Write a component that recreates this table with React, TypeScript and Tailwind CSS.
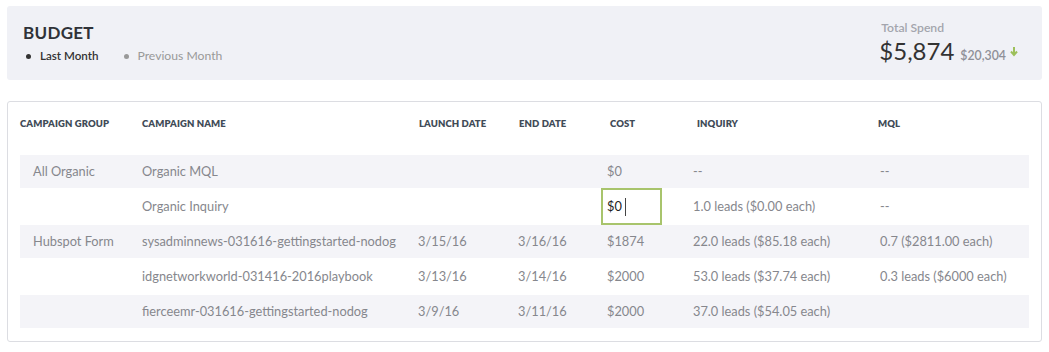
import React from "react";

const font = { fontFamily: "Lato, 'Open Sans', sans-serif" };

type Row = {
  group: string;
  name: string;
  launch: string;
  end: string;
  cost: string;
  inquiry: string;
  mql: string;
  striped: boolean;
  editing?: boolean;
};

const rows: Row[] = [
  { group: "All Organic", name: "Organic MQL", launch: "", end: "", cost: "$0", inquiry: "--", mql: "--", striped: true },
  { group: "", name: "Organic Inquiry", launch: "", end: "", cost: "$0", inquiry: "1.0 leads ($0.00 each)", mql: "--", striped: false, editing: true },
  { group: "Hubspot Form", name: "sysadminnews-031616-gettingstarted-nodog", launch: "3/15/16", end: "3/16/16", cost: "$1874", inquiry: "22.0 leads ($85.18 each)", mql: "0.7 ($2811.00 each)", striped: true },
  { group: "", name: "idgnetworkworld-031416-2016playbook", launch: "3/13/16", end: "3/14/16", cost: "$2000", inquiry: "53.0 leads ($37.74 each)", mql: "0.3 leads ($6000 each)", striped: false },
  { group: "", name: "fierceemr-031616-gettingstarted-nodog", launch: "3/9/16", end: "3/11/16", cost: "$2000", inquiry: "37.0 leads ($54.05 each)", mql: "", striped: true },
];

const cols = "grid grid-cols-[122px_276px_100px_83px_89px_186px_1fr]";

export default function App() {
  return (
    <div className="bg-white w-[1049px] h-[352px] pt-[6px] px-[7px]" style={font}>
      <div className="bg-[#f0f1f6] rounded-[3px] h-[74px] flex justify-between pl-[16px] pr-[24px]">
        <div className="pt-[17px]">
          <div className="text-[17px] font-bold text-[#2f3238] tracking-[0.3px] leading-[20px]">BUDGET</div>
          <div className="flex items-center mt-[6px] text-[11.6px] leading-[14px]">
            <span className="w-[5px] h-[5px] rounded-full bg-[#333] ml-[3px] mr-[9px]" />
            <span className="text-[#333] font-semibold">Last Month</span>
            <span className="w-[5px] h-[5px] rounded-full bg-[#999] ml-[26px] mr-[8px]" />
            <span className="text-[#999] text-[12.2px]">Previous Month</span>
          </div>
        </div>
        <div className="pt-[15px]">
          <div className="text-[12.2px] text-[#a3a5ad] font-semibold leading-[14px] pl-[2px]">Total Spend</div>
          <div className="flex items-baseline mt-[1px]">
            <span className="text-[24px] text-[#333] leading-[30px]">$5,874</span>
            <span className="text-[12.3px] text-[#8f9098] font-semibold ml-[6px]">$20,304</span>
            <svg width="8" height="10" viewBox="0 0 8 10" className="ml-[4px] self-center mt-[2px]">
              <path d="M4 0v7M1 4.5L4 8l3-3.5" stroke="#9dc05a" strokeWidth="2" fill="none" />
            </svg>
          </div>
        </div>
      </div>

      <div className="mt-[21px] border border-[#dcdde2] rounded-[3px] h-[241px] px-[12px]">
        <div className={`${cols} h-[44px] items-center text-[9.5px] font-extrabold text-[#414b57] tracking-[0.1px]`}>
          <div>CAMPAIGN GROUP</div>
          <div>CAMPAIGN NAME</div>
          <div className="pl-[1px]">LAUNCH DATE</div>
          <div className="pl-[1px]">END DATE</div>
          <div className="pl-[9px]">COST</div>
          <div className="pl-[7px]">INQUIRY</div>
          <div className="pl-[2px]">MQL</div>
        </div>
        <div className="mt-[9px]">
          {rows.map((r, i) => (
            <div
              key={i}
              className={`${cols} items-center text-[12.8px] text-[#86878d] ${r.striped ? "bg-[#f4f4f8] h-[33px]" : "bg-white h-[37px]"}`}
            >
              <div className="pl-[13px]">{r.group}</div>
              <div>{r.name}</div>
              <div>{r.launch}</div>
              <div>{r.end}</div>
              <div>
                {r.editing ? (
                  <div className="w-[61px] h-[37px] border-2 border-[#a8c46c] flex items-center pl-[4px] text-[#222]">
                    {r.cost}
                    <span className="w-px h-[18px] bg-[#444] ml-[3px]" />
                  </div>
                ) : (
                  <span className="pl-[6px]">{r.cost}</span>
                )}
              </div>
              <div className="pl-[3px]">{r.inquiry}</div>
              <div className="pl-[4px]">{r.mql}</div>
            </div>
          ))}
        </div>
      </div>
    </div>
  );
}
